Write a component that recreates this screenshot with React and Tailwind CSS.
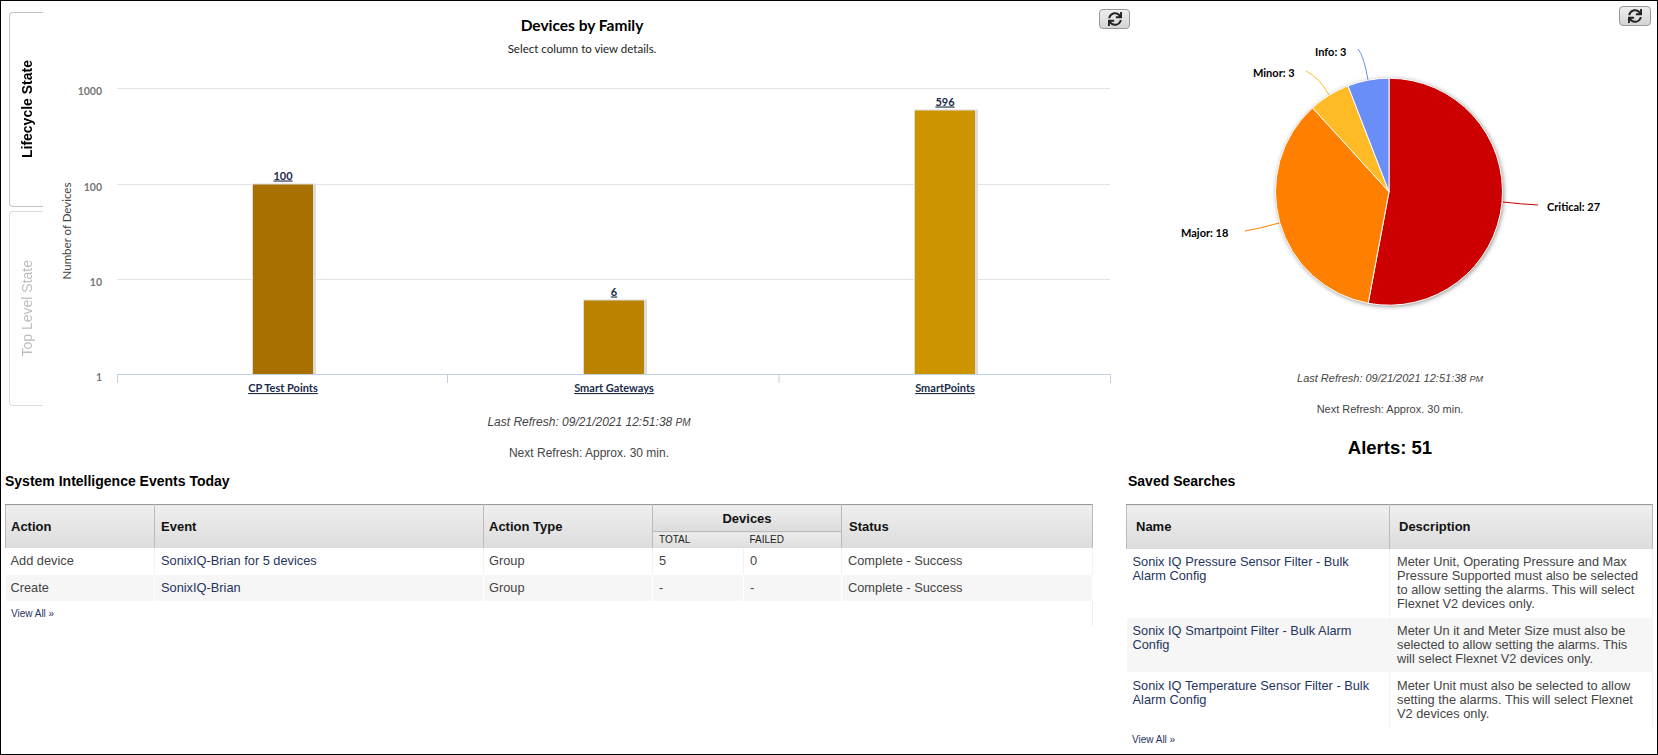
import { FaSync } from "react-icons/fa";

const chartFont = "font-['Lato',sans-serif]";

const gridLines = [
  { y: 88.5, label: "1000" },
  { y: 184.5, label: "100" },
  { y: 279.5, label: "10" },
  { y: 374.5, label: "1" },
];

const bars = [
  { x: 253, top: 184.5, fill: "#a87000", value: "100", name: "CP Test Points" },
  { x: 584, top: 300.5, fill: "#b98300", value: "6", name: "Smart Gateways" },
  { x: 915, top: 110.5, fill: "#cc9500", value: "596", name: "SmartPoints" },
];

const slices = [
  { value: 27, fill: "#cc0000" },
  { value: 18, fill: "#ff8000" },
  { value: 3, fill: "#ffbb26" },
  { value: 3, fill: "#6a8ef8" },
];

const pieLabels = [
  { text: "Critical: 27", x: 1547, y: 207, line: "M1503 202 Q1520 204 1538 205", color: "#cc0000" },
  { text: "Major: 18", x: 1181, y: 233, line: "M1279 223 Q1262 228 1245 231", color: "#ff8000" },
  { text: "Minor: 3", x: 1253, y: 73, line: "M1329 95 Q1320 78 1306 71", color: "#ffbb26" },
  { text: "Info: 3", x: 1315, y: 52, line: "M1368 80 Q1364 56 1358 49", color: "#6a8ef8" },
];

function slicePaths() {
  const total = slices.reduce((sum, s) => sum + s.value, 0);
  const cx = 1389;
  const cy = 191.7;
  const r = 113.5;
  let angle = -Math.PI / 2;
  return slices.map((s) => {
    const next = angle + (s.value / total) * Math.PI * 2;
    const large = next - angle > Math.PI ? 1 : 0;
    const d = `M${cx} ${cy} L${cx + r * Math.cos(angle)} ${cy + r * Math.sin(angle)} A${r} ${r} 0 ${large} 1 ${cx + r * Math.cos(next)} ${cy + r * Math.sin(next)} Z`;
    angle = next;
    return { d, fill: s.fill };
  });
}

function RefreshButton({ className }) {
  return (
    <button className={`absolute w-[31px] h-[20px] flex items-center justify-center rounded-[4px] border border-[#999] bg-gradient-to-b from-[#eeeeee] to-[#d4d4d4] text-[#222] ${className}`}>
      <FaSync size={14} />
    </button>
  );
}

function Tab({ label, active }) {
  return (
    <div className={`w-[34px] h-[195px] flex items-center justify-center rounded-l-[4px] border border-r-0 ${active ? "border-[#c4c4c4]" : "border-[#dcdcdc]"}`}>
      <span className={`[writing-mode:vertical-rl] rotate-180 text-[14px] leading-[16px] whitespace-nowrap ${active ? "font-bold text-black" : "text-[#bdbdbd]"}`}>
        {label}
      </span>
    </div>
  );
}

function BarChart() {
  return (
    <svg viewBox="43 1 1092 400" className={`w-[1092px] h-[400px] ${chartFont}`}>
      <text x="582" y="31" textAnchor="middle" fontSize="15.5" fontWeight="700" fill="#000">Devices by Family</text>
      <text x="582" y="53" textAnchor="middle" fontSize="11.5" fill="#222">Select column to view details.</text>
      {gridLines.map((g) => (
        <g key={g.label}>
          {g.label !== "1" && <line x1="117" x2="1110" y1={g.y} y2={g.y} stroke="#e4e4e4" />}
          <text x="102" y={g.y + 6} textAnchor="end" fontSize="10.5" fontWeight="700" fill="#777">{g.label}</text>
        </g>
      ))}
      <text transform="translate(71 231) rotate(-90)" textAnchor="middle" fontSize="11.5" fill="#444">Number of Devices</text>
      {bars.map((b) => (
        <g key={b.name}>
          <rect x={b.x - 1} y={b.top - 1} width="64" height={374.5 - b.top + 1} fill="#dcdcdc" />
          <rect x={b.x} y={b.top} width="60" height={374.5 - b.top} fill={b.fill} />
          <text x={b.x + 30} y={b.top - 5} textAnchor="middle" fontSize="11" fontWeight="700" fill="#1b2b4b" textDecoration="underline">{b.value}</text>
          <text x={b.x + 30} y="392" textAnchor="middle" fontSize="11" fontWeight="700" fill="#1b2b4b" textDecoration="underline">{b.name}</text>
        </g>
      ))}
      <path d="M117.5 383V374.5H1110.5V383M447.5 374.5V383M779 374.5V383" fill="none" stroke="#c0d0e0" />
    </svg>
  );
}

function PieChart() {
  return (
    <svg viewBox="1135 1 522 339" className={`w-[522px] h-[339px] ${chartFont}`}>
      {pieLabels.map((l) => (
        <g key={l.text}>
          <path d={l.line} fill="none" stroke={l.color} />
          <text x={l.x} y={l.y + 4} fontSize="11" fontWeight="700" fill="#000">{l.text}</text>
        </g>
      ))}
      <g className="drop-shadow-[1px_1px_2px_rgba(0,0,0,0.4)]">
        {slicePaths().map((s) => (
          <path key={s.fill} d={s.d} fill={s.fill} stroke="#fff" strokeWidth="1" />
        ))}
      </g>
    </svg>
  );
}

function RefreshInfo({ small }) {
  return (
    <div className={`text-center leading-[14px] text-[#444] ${small ? "text-[11px]" : "text-[12px]"}`}>
      <p className="italic">
        Last Refresh: 09/21/2021 12:51:38 <span className={small ? "text-[9px]" : "text-[10px]"}>PM</span>
      </p>
      <p className="mt-[16px]">Next Refresh: Approx. 30 min.</p>
    </div>
  );
}

function Heading({ children, className = "" }) {
  return <h2 className={`text-[14px] leading-[16px] font-bold text-black mb-[15px] ${className}`}>{children}</h2>;
}

const th = "bg-gradient-to-b from-[#efefef] to-[#dcdcdc] border-t border-t-[#999] border-x border-x-[#bbb] text-[13px] leading-[15px] font-bold text-[#111]";
const td = "text-[12.8px] leading-[14px] border-r border-r-[#f3f3f3]";
const link = "text-[#1f3560]";

function EventsTable() {
  return (
    <div className="w-[1088px] h-[122px] border-r border-r-[#eee]">
      <table className="w-[1088px] table-fixed">
        <colgroup>
          <col className="w-[149px]" />
          <col className="w-[329px]" />
          <col className="w-[169px]" />
          <col className="w-[91px]" />
          <col className="w-[98px]" />
          <col />
        </colgroup>
        <thead>
          <tr className="h-[27px]">
            <th rowSpan={2} className={`${th} text-left pl-[5px]`}>Action</th>
            <th rowSpan={2} className={`${th} text-left pl-[6px]`}>Event</th>
            <th rowSpan={2} className={`${th} text-left pl-[5px]`}>Action Type</th>
            <th colSpan={2} className={`${th} text-center border-b border-b-[#bbb]`}>Devices</th>
            <th rowSpan={2} className={`${th} text-left pl-[7px]`}>Status</th>
          </tr>
          <tr className="h-[16px]">
            <th className="bg-gradient-to-b from-[#ececec] to-[#dddddd] border-l border-l-[#bbb] pl-[6px] text-[10px] leading-[12px] font-normal text-left text-[#222]">TOTAL</th>
            <th className="bg-gradient-to-b from-[#ececec] to-[#dddddd] pl-[6px] text-[10px] leading-[12px] font-normal text-left text-[#222]">FAILED</th>
          </tr>
        </thead>
        <tbody className="text-[#444]">
          <tr className="h-[27px]">
            <td className={`${td} pl-[5px]`}>Add device</td>
            <td className={`${td} pl-[6px] ${link}`}>SonixIQ-Brian for 5 devices</td>
            <td className={`${td} pl-[5px]`}>Group</td>
            <td className={`${td} pl-[6px]`}>5</td>
            <td className={`${td} pl-[6px]`}>0</td>
            <td className={`${td} pl-[6px]`}>Complete - Success</td>
          </tr>
          <tr className="h-[26px] bg-[#f6f6f6]">
            <td className={`${td} pl-[5px] border-r-white`}>Create</td>
            <td className={`${td} pl-[6px] border-r-white ${link}`}>SonixIQ-Brian</td>
            <td className={`${td} pl-[5px] border-r-white`}>Group</td>
            <td className={`${td} pl-[6px] border-r-white`}>-</td>
            <td className={`${td} pl-[6px] border-r-white`}>-</td>
            <td className={`${td} pl-[6px] border-r-white`}>Complete - Success</td>
          </tr>
        </tbody>
      </table>
      <a className={`block mt-[6px] pl-[6px] text-[10px] leading-[14px] ${link}`}>View All »</a>
    </div>
  );
}

const searches = [
  {
    name: "Sonix IQ Pressure Sensor Filter - Bulk Alarm Config",
    desc: "Meter Unit, Operating Pressure and Max Pressure Supported must also be selected to allow setting the alarms. This will select Flexnet V2 devices only.",
    row: "h-[69px]",
    pad: "pt-[6px]",
  },
  {
    name: "Sonix IQ Smartpoint Filter - Bulk Alarm Config",
    desc: "Meter Un it and Meter Size must also be selected to allow setting the alarms. This will select Flexnet V2 devices only.",
    row: "h-[54px] bg-[#f6f6f6]",
    pad: "pt-[6px]",
  },
  {
    name: "Sonix IQ Temperature Sensor Filter - Bulk Alarm Config",
    desc: "Meter Unit must also be selected to allow setting the alarms. This will select Flexnet V2 devices only.",
    row: "h-[56px]",
    pad: "pt-[7px]",
  },
];

function SearchesTable() {
  return (
    <div className="w-[527px]">
      <table className="w-[527px] table-fixed">
        <colgroup>
          <col className="w-[263px]" />
          <col />
        </colgroup>
        <thead>
          <tr className="h-[44px]">
            <th className={`${th} text-left pl-[9px]`}>Name</th>
            <th className={`${th} text-left pl-[9px]`}>Description</th>
          </tr>
        </thead>
        <tbody>
          {searches.map((s) => (
            <tr key={s.name} className={s.row}>
              <td className={`${td} align-top ${s.pad} pl-[6px] pr-[6px] ${link}`}>{s.name}</td>
              <td className={`${td} align-top ${s.pad} pl-[7px] pr-[6px] text-[#444]`}>{s.desc}</td>
            </tr>
          ))}
        </tbody>
      </table>
      <a className={`block mt-[5px] pl-[6px] text-[10px] leading-[14px] ${link}`}>View All »</a>
    </div>
  );
}

export default function App() {
  return (
    <div className="w-[1658px] h-[755px] border border-black overflow-hidden bg-white font-['Liberation_Sans',Arial,sans-serif]">
      <div className="flex h-[466px]">
        <div className="w-[42px] shrink-0 pl-[8px] pt-[11px] flex flex-col gap-[4px]">
          <Tab label="Lifecycle State" active />
          <Tab label="Top Level State" />
        </div>
        <div className="w-[1092px] shrink-0 relative">
          <RefreshButton className="left-[1056px] top-[8px]" />
          <BarChart />
          <div className="mt-[14px]">
            <RefreshInfo />
          </div>
        </div>
        <div className="flex-1 relative">
          <RefreshButton className="left-[484px] top-[5px] w-[32px]" />
          <PieChart />
          <div className="mt-[31px] pr-[12px]">
            <RefreshInfo small />
            <p className="mt-[20px] text-center text-[18.5px] leading-[24px] font-bold text-black">Alerts: 51</p>
          </div>
        </div>
      </div>
      <div className="flex pt-[6px]">
        <div className="pl-[4px] w-[1125px] shrink-0">
          <Heading>System Intelligence Events Today</Heading>
          <EventsTable />
        </div>
        <div>
          <Heading className="pl-[2px]">Saved Searches</Heading>
          <SearchesTable />
        </div>
      </div>
    </div>
  );
}
